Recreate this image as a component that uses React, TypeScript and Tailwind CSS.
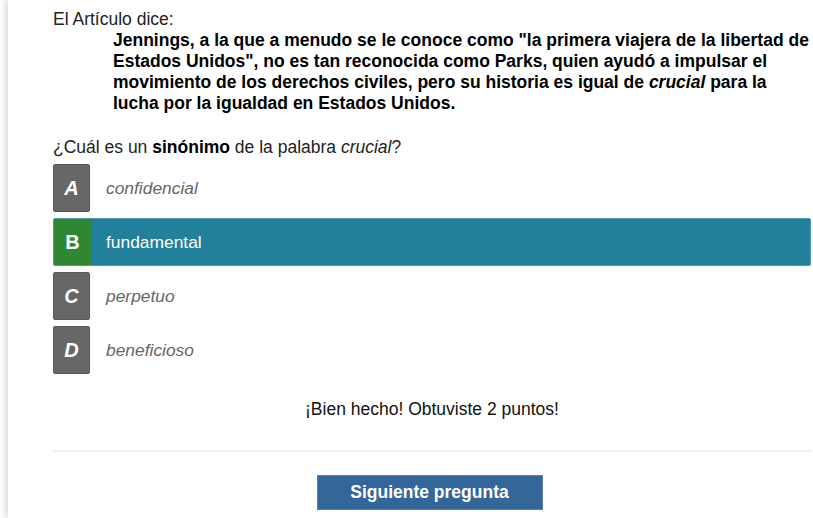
const options = [
  { letter: "A", text: "confidencial" },
  { letter: "B", text: "fundamental", correct: true },
  { letter: "C", text: "perpetuo" },
  { letter: "D", text: "beneficioso" },
];

export default function App() {
  return (
    <div className="min-h-[518px] bg-white font-['Liberation_Sans',Arial,sans-serif] text-black">
      <div className="ml-2 min-h-[518px] pl-[45px] pr-[2px] pt-[9px] shadow-[-3px_0_6px_rgba(0,0,0,0.14)]">
        {/* Article excerpt */}
        <p className="text-[17.5px] leading-[21px] text-[#222]">El Artículo dice:</p>
        <p className="pl-[60px] text-[17.5px] font-bold leading-[21px]">
          Jennings, a la que a menudo se le conoce como "la primera viajera de la libertad de Estados Unidos", no es tan
          reconocida como Parks, quien ayudó a impulsar el movimiento de los derechos civiles, pero su historia es igual
          de <i>crucial</i> para la lucha por la igualdad en Estados Unidos.
        </p>

        {/* Question */}
        <p className="mt-[23px] text-[17.5px] leading-[21px] text-[#222]">
          ¿Cuál es un <b className="text-black">sinónimo</b> de la palabra <i>crucial</i>?
        </p>

        {/* Options */}
        <div className="mt-[6px] flex flex-col gap-[6px]">
          {options.map((o) =>
            o.correct ? (
              <div key={o.letter} className="flex h-[48px] items-stretch rounded-[2px] border border-[#4a9ab3] bg-[#21809b]">
                <div className="flex w-[37px] items-center justify-center rounded-l-[2px] bg-[#2f8733] text-[20px] font-bold text-white">
                  {o.letter}
                </div>
                <div className="flex items-center pl-[15px] text-[17.4px] text-white">{o.text}</div>
              </div>
            ) : (
              <div key={o.letter} className="flex h-[48px] items-stretch">
                <div className="flex w-[37px] items-center justify-center rounded-[2px] border border-[#5a5a5a] bg-[#676767] text-[20px] font-bold italic text-white">
                  {o.letter}
                </div>
                <div className="flex items-center pl-[16px] text-[17.4px] italic text-[#666]">{o.text}</div>
              </div>
            )
          )}
        </div>

        {/* Feedback */}
        <p className="mt-[25px] text-center text-[17.5px] leading-[21px] text-[#111]">¡Bien hecho! Obtuviste 2 puntos!</p>

        <div className="mt-[30px] h-[2px] bg-[#efefef]" />

        <div className="mt-[23px] flex justify-center pr-[5px]">
          <button className="h-[35px] w-[226px] border border-[#5a82ad] bg-[#336699] text-[17.5px] font-bold text-white">
            Siguiente pregunta
          </button>
        </div>
      </div>
    </div>
  );
}
